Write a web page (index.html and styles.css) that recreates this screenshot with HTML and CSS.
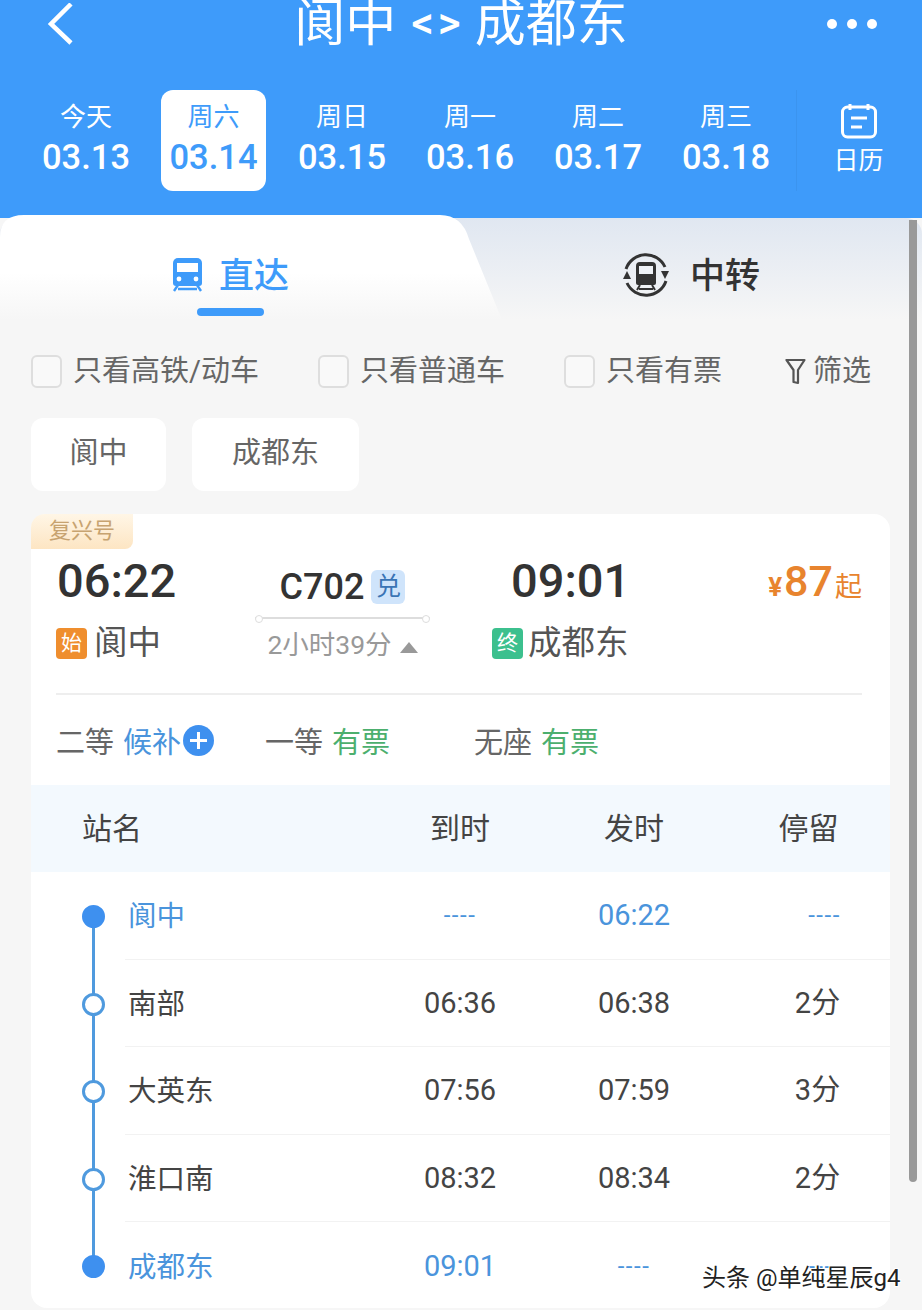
FILE: index.html
```html
<!DOCTYPE html>
<html lang="zh-CN">
<head>
  <meta charset="UTF-8" />
  <meta name="viewport" content="width=device-width, initial-scale=1.0"/>
  <title>阆中 &lt;&gt; 成都东</title>
  <link rel="stylesheet" href="styles.css">
</head>
<body>

  <div class="page">
    <!-- 顶部 -->
    <header class="header">
      <div class="title-bar">
        <div class="back">
          <svg width="27" height="42" viewBox="0 0 27 42"><path d="M24 1 L4 21 L24 40" fill="none" stroke="#fff" stroke-width="4.5"/></svg>
        </div>
        <div class="title">阆中<span class="title-arrows">&lt;&gt;</span>成都东</div>
        <div class="more"><i></i><i></i><i></i></div>
      </div>

      <div class="dates">
        <div class="date-item"><span class="day">今天</span><span class="num">03.13</span></div>
        <div class="date-item active"><span class="day">周六</span><span class="num">03.14</span></div>
        <div class="date-item"><span class="day">周日</span><span class="num">03.15</span></div>
        <div class="date-item"><span class="day">周一</span><span class="num">03.16</span></div>
        <div class="date-item"><span class="day">周二</span><span class="num">03.17</span></div>
        <div class="date-item"><span class="day">周三</span><span class="num">03.18</span></div>
        <div class="calendar">
          <svg width="38" height="36" viewBox="0 0 38 36"><rect x="2.5" y="4" width="33" height="30" rx="5" fill="none" stroke="#fff" stroke-width="3"/><path d="M10 1v6M28 1v6M11 15h16M11 24h11" fill="none" stroke="#fff" stroke-width="3"/></svg>
          <span>日历</span>
        </div>
      </div>
    </header>

    <main class="panel">
      <!-- 直达 / 中转 -->
      <div class="tabs">
        <div class="tab tab-direct">
          <svg width="31" height="34" viewBox="0 0 31 34"><path d="M6 0h19a5 5 0 0 1 5 5v20a3 3 0 0 1-3 3H4a3 3 0 0 1-3-3V5a5 5 0 0 1 5-5z" fill="#3e9bfa"/><path d="M5 5h21v9H5z" fill="#fff"/><circle cx="7" cy="21" r="2.4" fill="#fff"/><circle cx="24" cy="21" r="2.4" fill="#fff"/><path d="M6 27l-4 6M25 27l4 6M6 31h19" fill="none" stroke="#3e9bfa" stroke-width="2.4"/></svg>
          <span class="tab-text">直达</span>
          <span class="tab-line"></span>
        </div>
        <div class="tab tab-transfer">
          <svg width="48" height="48" viewBox="0 0 48 48">
            <path d="M4 18A21 21 0 0 1 43 16" fill="none" stroke="#333" stroke-width="3"/>
            <path d="M44 30A21 21 0 0 1 5 32" fill="none" stroke="#333" stroke-width="3"/>
            <path d="M39 20h8l-4 8zM1 28h8l-4-8z" fill="#333"/>
            <path d="M18 11h12a4 4 0 0 1 4 4v17a2 2 0 0 1-2 2H16a2 2 0 0 1-2-2V15a4 4 0 0 1 4-4z" fill="#333"/>
            <path d="M17 15h14v8H17z" fill="#eef1f6"/>
            <path d="M18 34l-3 5M30 34l3 5M17 38h14" fill="none" stroke="#333" stroke-width="2"/>
          </svg>
          <span class="tab-text">中转</span>
        </div>
      </div>

      <!-- 筛选 -->
      <div class="filters">
        <label class="check check-1"><i class="box"></i>只看高铁/动车</label>
        <label class="check check-2"><i class="box"></i>只看普通车</label>
        <label class="check check-3"><i class="box"></i>只看有票</label>
        <div class="filter-btn">
          <svg width="21" height="28" viewBox="0 0 21 28"><path d="M1.500 2h18l-6.500 10v13l-4.500-1V12z" fill="none" stroke="#555" stroke-width="2.200" stroke-linejoin="round"/></svg>
          筛选
        </div>
      </div>

      <div class="chips">
        <div class="chip chip-from">阆中</div>
        <div class="chip chip-to">成都东</div>
      </div>

      <!-- 车次 -->
      <section class="card">
        <div class="badge-top">复兴号</div>
        <div class="train">
          <div class="side side-from">
            <div class="time">06:22</div>
            <div class="station"><b class="mark mark-start">始</b>阆中</div>
          </div>
          <div class="middle">
            <div class="code">C702<b class="mark-dui">兑</b></div>
            <div class="track"></div>
            <div class="duration">2小时39分<i class="caret"></i></div>
          </div>
          <div class="side side-to">
            <div class="time">09:01</div>
            <div class="station"><b class="mark mark-end">终</b>成都东</div>
          </div>
          <div class="price"><small>¥</small>87<span>起</span></div>
        </div>

        <div class="seats">
          <div class="seat seat-2">二等 <span class="blue">候补</span><i class="plus"></i></div>
          <div class="seat seat-1">一等 <span class="green">有票</span></div>
          <div class="seat seat-0">无座 <span class="green">有票</span></div>
        </div>

        <div class="stops-head">
          <div>站名</div><div class="c">到时</div><div class="c">发时</div><div class="c last">停留</div>
        </div>

        <div class="stop first end">
          <div class="node"><i></i></div>
          <div class="stop-row"><div class="name">阆中</div><div class="c dash">----</div><div class="c">06:22</div><div class="c stay dash">----</div></div>
        </div>
        <div class="stop">
          <div class="node"><i></i></div>
          <div class="stop-row"><div class="name">南部</div><div class="c">06:36</div><div class="c">06:38</div><div class="c stay">2分</div></div>
        </div>
        <div class="stop">
          <div class="node"><i></i></div>
          <div class="stop-row"><div class="name">大英东</div><div class="c">07:56</div><div class="c">07:59</div><div class="c stay">3分</div></div>
        </div>
        <div class="stop">
          <div class="node"><i></i></div>
          <div class="stop-row"><div class="name">淮口南</div><div class="c">08:32</div><div class="c">08:34</div><div class="c stay">2分</div></div>
        </div>
        <div class="stop last-stop end">
          <div class="node"><i></i></div>
          <div class="stop-row"><div class="name">成都东</div><div class="c">09:01</div><div class="c dash">----</div><div class="c stay dash">----</div></div>
        </div>
      </section>
    </main>

    <div class="scrollbar"></div>
    <div class="watermark">头条 @单纯星辰g4</div>
  </div>

</body>
</html>
```

FILE: styles.css
```css
* {
  box-sizing: border-box;
}
html, body {
  margin: 0;
  padding: 0;
}
body {
  font-family: Roboto, "Noto Sans CJK SC", sans-serif;
  background-color: #f6f6f6;
  color: #333;
}
i {
  font-style: normal;
}
.page {
  position: relative;
  width: 922px;
  height: 1310px;
  overflow: hidden;
}

/* header */
.header {
  height: 218px;
  background-color: #3e9bfa;
  color: #fff;
}
.title-bar {
  display: grid;
  grid-template-columns: 1fr auto 1fr;
  align-items: center;
  height: 44px;
}
.back {
  padding-left: 47px;
  height: 42px;
}
.title {
  font-size: 51px;
  line-height: 46px;
  white-space: nowrap;
}
.title-arrows {
  font-size: 44px;
  font-weight: 500;
  letter-spacing: 4px;
  vertical-align: 3px;
  margin: 0 10px 0 15px;
}
.more {
  display: flex;
  justify-content: flex-end;
  gap: 10px;
  padding-right: 45px;
}
.more i {
  width: 10px;
  height: 10px;
  border-radius: 50%;
  background-color: #fff;
}
.dates {
  display: flex;
  padding-left: 22px;
  margin-top: 46px;
}
.date-item {
  flex: none;
  width: 128px;
  height: 101px;
  display: flex;
  flex-direction: column;
  align-items: center;
  padding-top: 10px;
  border-radius: 12px;
}
.date-item.active {
  width: 105px;
  margin: 0 12px 0 11px;
  background-color: #fff;
  color: #3e9bfa;
}
.day {
  font-size: 26px;
  line-height: 34px;
}
.num {
  font-size: 34.500px;
  font-weight: 500;
  line-height: 44px;
  margin-top: 1px;
}
.calendar {
  flex: none;
  display: flex;
  flex-direction: column;
  align-items: center;
  width: 128px;
  margin-left: 6px;
  padding: 13px 4px 0 0;
  font-size: 25px;
  line-height: 34px;
  border-left: 1px solid #3b94ef;
}
.calendar svg {
  margin-bottom: 5px;
}

/* tabs */
.panel {
  background-color: #f6f6f6;
  border-radius: 16px 16px 0 0;
}
.tabs {
  display: flex;
  height: 102px;
  border-radius: 16px 16px 0 0;
  background: linear-gradient(#e0e7f1, #f6f6f6);
}
.tab {
  position: relative;
  display: flex;
  align-items: center;
  gap: 16px;
}
.tab-direct {
  width: 505px;
  height: 105px;
  margin-top: -3px;
  padding: 15px 0 0 172px;
  background: linear-gradient(#fff 55%, #f6f6f6);
  clip-path: path("M0 105 V22 Q0 0 24 0 H440 Q462 0 469 24 L502 105 Z");
  color: #3e9bfa;
}
.tab-transfer {
  padding: 12px 0 0 117px;
  gap: 20px;
}
.tab-text {
  padding-top: 3px;
  font-size: 35px;
  font-weight: 500;
  line-height: 40px;
}
.tab-line {
  position: absolute;
  left: 197px;
  top: 93px;
  width: 67px;
  height: 8px;
  border-radius: 4px;
  background-color: #3e9bfa;
}

/* filters */
.filters {
  display: flex;
  align-items: center;
  height: 33px;
  margin-top: 35px;
  padding-left: 31px;
  font-size: 29px;
  line-height: 33px;
  color: #666;
}
.check {
  display: flex;
  align-items: center;
  gap: 11px;
  white-space: nowrap;
}
.check-1 {
  width: 287px;
}
.check-2 {
  width: 246px;
}
.check-3 {
  width: 221px;
}
.box {
  width: 31px;
  height: 33px;
  border: 2px solid #dedede;
  border-radius: 6px;
  background-color: #f9f9f9;
}
.filter-btn {
  display: flex;
  align-items: center;
  gap: 7px;
  white-space: nowrap;
}
.chips {
  display: flex;
  gap: 26px;
  margin: 30px 0 0 31px;
}
.chip {
  height: 73px;
  line-height: 70px;
  border-radius: 12px;
  background-color: #fff;
  font-size: 29px;
  color: #666;
  text-align: center;
}
.chip-from {
  width: 135px;
}
.chip-to {
  width: 167px;
}

/* card */
.card {
  width: 859px;
  margin: 23px 0 0 31px;
  height: 794px;
  background-color: #fff;
  border-radius: 16px;
}
.badge-top {
  width: 102px;
  height: 35px;
  line-height: 33px;
  padding-left: 18px;
  font-size: 22px;
  color: #c7a370;
  background: linear-gradient(#fff6e6, #fde5c3);
  border-radius: 14px 0 8px 0;
}
.train {
  display: flex;
  height: 146px;
  margin: 0 28px 0 25px;
  border-bottom: 2px solid #eeeeee;
}
.side-from {
  width: 199px;
}
.side-to {
  width: 253px;
  padding-left: 62px;
}
.time {
  font-size: 47px;
  font-weight: 500;
  line-height: 64px;
}
.side-to .time {
  padding-left: 19px;
}
.side-from .time {
  padding-left: 1px;
}
.station {
  display: flex;
  align-items: center;
  margin-top: 10px;
  font-size: 33.500px;
  line-height: 40px;
  color: #555;
}
.mark {
  width: 31px;
  height: 31px;
  margin-right: 7px;
  border-radius: 4px;
  font-size: 21px;
  font-weight: 400;
  line-height: 30px;
  text-align: center;
  color: #fff;
}
.mark-start {
  background-color: #ef8e2e;
}
.mark-end {
  background-color: #3cc08e;
  margin-right: 5px;
}
.middle {
  width: 175px;
  text-align: center;
}
.code {
  display: flex;
  align-items: center;
  justify-content: center;
  gap: 7px;
  height: 44px;
  margin-top: 16px;
  font-size: 36px;
  font-weight: 500;
}
.mark-dui {
  width: 34px;
  height: 34px;
  border-radius: 6px;
  background-color: #cfe4fb;
  color: #3a74b5;
  font-size: 25px;
  font-weight: 400;
  line-height: 33px;
}
.track {
  position: relative;
  height: 2px;
  margin-top: 8px;
  background-color: #dddddd;
}
.track::before,
.track::after {
  content: "";
  position: absolute;
  top: -2px;
  width: 6px;
  height: 6px;
  border: 1px solid #ddd;
  border-radius: 50%;
  background-color: #fff;
}
.track::before {
  left: 0;
}
.track::after {
  right: 0;
}
.duration {
  display: flex;
  align-items: center;
  justify-content: center;
  gap: 8px;
  margin-top: 8px;
  font-size: 26.500px;
  line-height: 36px;
  color: #999;
}
.caret {
  width: 0;
  height: 0;
  margin-top: 4px;
  border-left: 9px solid transparent;
  border-right: 9px solid transparent;
  border-bottom: 11px solid #999;
}
.price {
  flex: 1;
  text-align: right;
  font-size: 43px;
  font-weight: 500;
  line-height: 64px;
  color: #e8842e;
  white-space: nowrap;
}
.price small {
  font-size: 26px;
  font-weight: 700;
  margin-right: 2px;
}
.price span {
  font-size: 27px;
  font-weight: 400;
  margin-left: 2px;
}

/* seats */
.seats {
  display: flex;
  align-items: center;
  height: 90px;
  padding-left: 25px;
  font-size: 29px;
  color: #666;
}
.seat {
  display: flex;
  align-items: center;
  gap: 9px;
  white-space: nowrap;
}
.seat-2 {
  width: 209px;
}
.seat-1 {
  width: 209px;
}
.blue {
  color: #4a94dc;
}
.green {
  color: #4caf6e;
}
.plus {
  position: relative;
  width: 31px;
  height: 31px;
  margin-left: -7px;
  border-radius: 50%;
  background-color: #3e90ef;
}
.plus::before,
.plus::after {
  content: "";
  position: absolute;
  background-color: #fff;
}
.plus::before {
  left: 7px;
  top: 14px;
  width: 17px;
  height: 3px;
}
.plus::after {
  left: 14px;
  top: 7px;
  width: 3px;
  height: 17px;
}

/* stops */
.stops-head {
  display: grid;
  grid-template-columns: 291px 174px 174px 169px;
  align-items: center;
  height: 87px;
  padding-left: 51px;
  background-color: #f3f9fe;
  font-size: 30px;
  line-height: 40px;
  color: #444;
}
.c {
  text-align: center;
  white-space: nowrap;
  line-height: 40px;
}
.c.last {
  padding-left: 6px;
}
.c.stay {
  padding-left: 24px;
}
.c.stay.dash {
  padding-left: 38px;
}
.stop {
  position: relative;
  display: flex;
  height: 87.500px;
}
.node {
  position: relative;
  width: 94px;
  flex: none;
}
.node::before {
  content: "";
  position: absolute;
  left: 61px;
  top: 0;
  bottom: 0;
  width: 3px;
  background-color: #4f9ade;
}
.first .node::before {
  top: 50%;
}
.last-stop .node::before {
  bottom: 50%;
}
.node i {
  position: absolute;
  left: 51px;
  top: 33px;
  width: 23px;
  height: 23px;
  border: 3px solid #4f9ade;
  border-radius: 50%;
  background-color: #fff;
}
.end .node i {
  border-color: #3e90ef;
  background-color: #3e90ef;
}
.stop-row {
  flex: 1;
  display: grid;
  grid-template-columns: 248px 174px 174px 169px;
  align-items: center;
  border-bottom: 1px solid #f2f2f2;
  font-size: 29px;
  color: #444;
}
.last-stop .stop-row {
  border-bottom: none;
}
.name {
  padding: 4px 0 0 3px;
  font-size: 28.500px;
  line-height: 40px;
}
.first .stop-row,
.last-stop .stop-row {
  color: #4a94dc;
}
.dash {
  color: #4a94dc;
  font-size: 24px;
  letter-spacing: 1.500px;
}

/* overlays */
.scrollbar {
  position: absolute;
  left: 909px;
  top: 220px;
  width: 8px;
  height: 962px;
  border-radius: 0 0 4px 4px;
  background-color: #999;
}
.watermark {
  position: absolute;
  left: 702px;
  top: 1262px;
  font-size: 24px;
  line-height: 32px;
  color: #222;
  white-space: nowrap;
  text-shadow: 1px 1px 0 #fff, -1px -1px 0 #fff, 1px -1px 0 #fff, -1px 1px 0 #fff;
}
```
